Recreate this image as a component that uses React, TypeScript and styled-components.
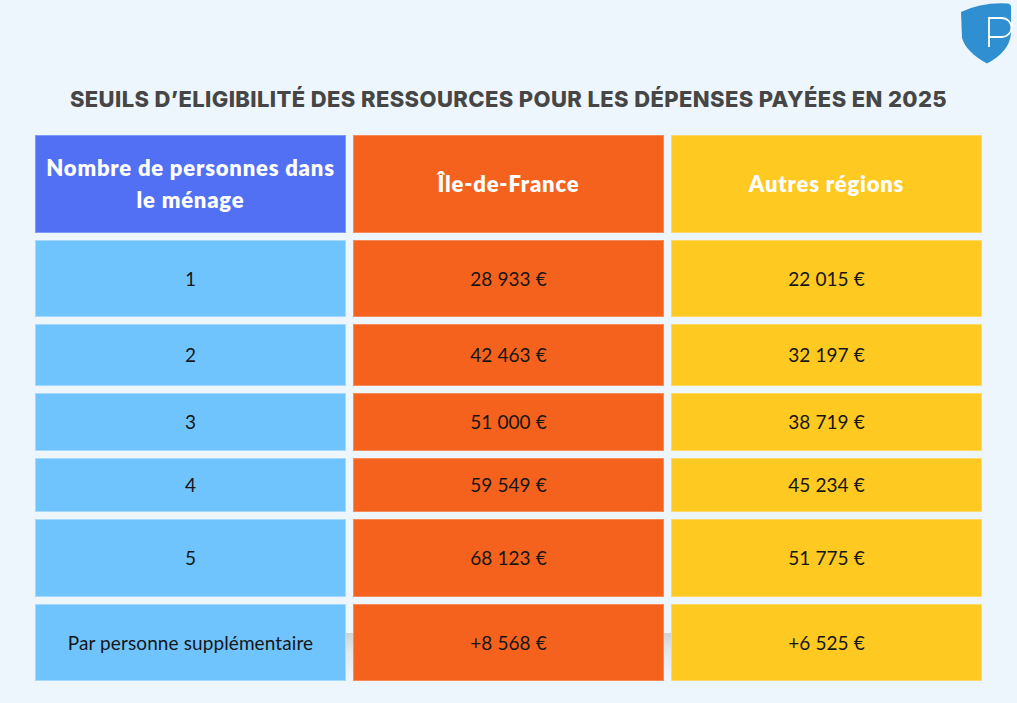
import React from "react";
import styled, { createGlobalStyle } from "styled-components";

const Global = createGlobalStyle`
  html, body { margin: 0; padding: 0; background: #eef6fd; }
  body { width: 1017px; height: 703px; overflow: hidden; }
`;

const Page = styled.div`
  position: relative;
  width: 1017px;
  height: 703px;
  background: #eef6fd;
  display: flex;
  flex-direction: column;
  align-items: center;
  box-sizing: border-box;
  padding-top: 84px;
`;

const Logo = styled.svg`
  position: absolute;
  top: 0;
  left: 958px;
`;

const Title = styled.h1`
  margin: 0;
  font-family: "Inter", "Open Sans", sans-serif;
  font-weight: 800;
  font-size: 22px;
  line-height: 30px;
  color: #464646;
  letter-spacing: 0.38px;
  white-space: nowrap;
`;

const Table = styled.div`
  margin-top: 21px;
  display: grid;
  grid-template-columns: repeat(3, 311px);
  grid-template-rows: 98px 77px 62px 58px 54px 78px 77px;
  column-gap: 7px;
  row-gap: 7px;
  position: relative;
`;

const Shade = styled.div`
  grid-column: 1 / 4;
  grid-row: 7;
  margin-top: 29px;
  background: linear-gradient(to bottom, #cfd3d8 0%, #e4e9ee 40%, #eef6fd 100%);
  z-index: 0;
`;

type Tone = "violet" | "blue" | "orange" | "yellow";
const tones: Record<Tone, { bg: string; border: string }> = {
  violet: { bg: "#5270f4", border: "#7f97f7" },
  blue: { bg: "#70c4fe", border: "#a5d9fe" },
  orange: { bg: "#f5621e", border: "#f88b5a" },
  yellow: { bg: "#fec921", border: "#fed968" },
};

const Cell = styled.div<{ $tone: Tone; $row: number; $col: number; $head?: boolean }>`
  grid-row: ${(p) => p.$row};
  grid-column: ${(p) => p.$col};
  z-index: 1;
  background: ${(p) => tones[p.$tone].bg};
  box-shadow: inset 0 0 0 1px ${(p) => tones[p.$tone].border};
  display: flex;
  align-items: center;
  justify-content: center;
  text-align: center;
  box-sizing: border-box;
  padding: 0 8px;
  font-family: "Lato", "Open Sans", sans-serif;
  font-weight: ${(p) => (p.$head ? 800 : 400)};
  font-size: ${(p) => (p.$head ? "22px" : "19px")};
  letter-spacing: ${(p) => (p.$head ? "0.8px" : "0.1px")};
  line-height: ${(p) => (p.$head ? "32px" : "22px")};
  color: ${(p) => (p.$head ? "#ffffff" : "#161616")};
`;

const headers = ["Nombre de personnes dans le ménage", "Île-de-France", "Autres régions"];
const rows: [string, string, string][] = [
  ["1", "28 933 €", "22 015 €"],
  ["2", "42 463 €", "32 197 €"],
  ["3", "51 000 €", "38 719 €"],
  ["4", "59 549 €", "45 234 €"],
  ["5", "68 123 €", "51 775 €"],
  ["Par personne supplémentaire", "+8 568 €", "+6 525 €"],
];
const headTones: Tone[] = ["violet", "orange", "yellow"];
const bodyTones: Tone[] = ["blue", "orange", "yellow"];

export default function App() {
  return (
    <>
      <Global />
      <Page>
        <Logo width="58" height="66" viewBox="0 0 58 66">
          <path
            d="M3 12 Q24 2 50 3.5 Q53 4 53 7 L53 34 Q51 52 29 63.5 Q8 52 4 38 Z"
            fill="#2f8fd0"
          />
          <path
            d="M31 47 V18 H44 A9.5 9.5 0 0 1 44 37 H31"
            fill="none"
            stroke="#ffffff"
            strokeWidth="1.8"
          />
        </Logo>
        <Title>SEUILS D’ELIGIBILITÉ DES RESSOURCES POUR LES DÉPENSES PAYÉES EN 2025</Title>
        <Table>
          {headers.map((h, i) => (
            <Cell key={h} $tone={headTones[i]} $row={1} $col={i + 1} $head>
              {h}
            </Cell>
          ))}
          {rows.map((r, ri) =>
            r.map((v, ci) => (
              <Cell key={`${ri}-${ci}`} $tone={bodyTones[ci]} $row={ri + 2} $col={ci + 1}>
                {v}
              </Cell>
            ))
          )}
          <Shade />
        </Table>
      </Page>
    </>
  );
}
